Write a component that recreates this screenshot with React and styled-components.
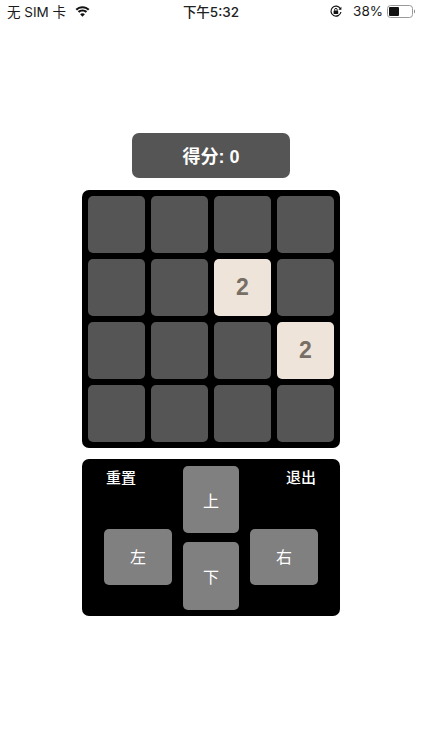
import React from "react";
import styled, { createGlobalStyle } from "styled-components";

const Global = createGlobalStyle`
  html, body { margin: 0; padding: 0; background: #fff; }
  body { font-family: "Liberation Sans", "Noto Sans CJK SC", sans-serif; }
`;

const Page = styled.div`
  width: 422px;
  height: 750px;
  overflow: hidden;
  display: flex;
  flex-direction: column;
  align-items: center;
  background: #fff;
`;

const StatusBar = styled.div`
  width: 100%;
  height: 21px;
  box-sizing: border-box;
  padding: 1px 7px 0 7px;
  display: grid;
  grid-template-columns: 1fr auto 1fr;
  align-items: center;
  font-family: Inter, "Noto Sans CJK SC", sans-serif;
  font-size: 13.5px;
  color: #1a1a1a;
`;

const StatusLeft = styled.div`
  display: flex;
  align-items: center;
  gap: 9px;
`;

const StatusTime = styled.div`
  font-weight: 500;
  font-size: 13.5px;
  color: #222;
`;

const StatusRight = styled.div`
  display: flex;
  align-items: center;
  justify-content: flex-end;
  gap: 4px;
`;

const Percent = styled.span`
  margin-left: 7px;
  font-size: 13.5px;
`;

const Score = styled.div`
  margin-top: 112px;
  width: 158px;
  height: 45px;
  padding-bottom: 2px;
  box-sizing: border-box;
  border-radius: 7px;
  background: #555;
  color: #fff;
  font-size: 18px;
  font-weight: 700;
  display: flex;
  align-items: center;
  justify-content: center;
`;

const Board = styled.div`
  margin-top: 12px;
  width: 258px;
  height: 258px;
  box-sizing: border-box;
  padding: 6px;
  border-radius: 7px;
  background: #000;
  display: grid;
  grid-template-columns: repeat(4, 57px);
  grid-template-rows: repeat(4, 56.7px);
  column-gap: 6px;
  row-gap: 6.3px;
`;

const Cell = styled.div`
  border-radius: 5px;
  background: ${(p) => (p.$value ? "#eee4da" : "#555")};
  color: #776e65;
  font-size: 23px;
  font-weight: 700;
  display: flex;
  align-items: center;
  justify-content: center;
`;

const Controls = styled.div`
  margin-top: 11px;
  width: 258px;
  height: 157px;
  box-sizing: border-box;
  padding: 7px 22px 0;
  border-radius: 7px;
  background: #000;
  display: flex;
  justify-content: space-between;
`;

const SideColumn = styled.div`
  width: 68px;
  display: flex;
  flex-direction: column;
`;

const MiddleColumn = styled.div`
  width: 56px;
  display: flex;
  flex-direction: column;
  gap: 9px;
`;

const TextAction = styled.button`
  height: 63px;
  padding: 0 2px 42px;
  border: 0;
  background: none;
  color: #fff;
  font: 500 15px "Liberation Sans", "Noto Sans CJK SC", sans-serif;
  text-align: ${(p) => p.$align};
`;

const Pad = styled.button`
  width: 100%;
  height: ${(p) => p.$h}px;
  border: 0;
  padding: 0 0 ${(p) => p.$lift || 0}px;
  border-radius: 5px;
  background: #808080;
  color: #fff;
  font: 400 16px "Liberation Sans", "Noto Sans CJK SC", sans-serif;
  display: flex;
  align-items: center;
  justify-content: center;
`;

const Wifi = () => (
  <svg width="15" height="11" viewBox="0 0 17 12" fill="#111">
    <path d="M8.5 2.4c2.4 0 4.6.9 6.2 2.5L16.4 3.2C14.3 1.2 11.5 0 8.5 0S2.7 1.2.6 3.2l1.7 1.7C3.9 3.3 6.1 2.4 8.5 2.4z" />
    <path d="M8.5 6c1.4 0 2.7.5 3.6 1.4l1.7-1.7C12.4 4.4 10.5 3.6 8.5 3.6s-3.9.8-5.3 2.1l1.7 1.7C5.8 6.5 7.1 6 8.5 6z" />
    <path d="M8.5 12l2.7-2.9c-.7-.6-1.7-1-2.7-1s-2 .4-2.7 1z" />
  </svg>
);

const RotationLock = () => (
  <svg width="12" height="13" viewBox="0 0 12 13" fill="none" stroke="#111">
    <path d="M10.4 3.8A5 5 0 1 0 10.9 7" strokeWidth="1.2" />
    <path d="M11.4 1.8v3h-3z" fill="#111" stroke="none" />
    <rect x="3.6" y="5.6" width="4.6" height="3.4" fill="#111" stroke="none" rx=".5" />
    <path d="M4.6 5.6V4.7a1.3 1.3 0 0 1 2.6 0v.9" strokeWidth="1" />
  </svg>
);

const Battery = () => (
  <svg width="28" height="13" viewBox="0 0 28 13">
    <rect x=".5" y=".5" width="25" height="12" rx="3" fill="none" stroke="#999" />
    <rect x="2" y="2" width="10" height="9" rx="1" fill="#111" />
    <path d="M27 4.6v3.8c.6-.3 1-1 1-1.9s-.4-1.6-1-1.9z" fill="#888" />
  </svg>
);

const board = [
  [0, 0, 0, 0],
  [0, 0, 2, 0],
  [0, 0, 0, 2],
  [0, 0, 0, 0],
];

export default function App() {
  return (
    <Page>
      <Global />
      <StatusBar>
        <StatusLeft>
          <span>无 SIM 卡</span>
          <Wifi />
        </StatusLeft>
        <StatusTime>下午5:32</StatusTime>
        <StatusRight>
          <RotationLock />
          <Percent>38%</Percent>
          <Battery />
        </StatusRight>
      </StatusBar>
      <Score>得分: 0</Score>
      <Board>
        {board.flat().map((v, i) => (
          <Cell key={i} $value={v}>
            {v || ""}
          </Cell>
        ))}
      </Board>
      <Controls>
        <SideColumn>
          <TextAction $align="left">重置</TextAction>
          <Pad $h={56} $lift={2}>左</Pad>
        </SideColumn>
        <MiddleColumn>
          <Pad $h={67}>上</Pad>
          <Pad $h={68}>下</Pad>
        </MiddleColumn>
        <SideColumn>
          <TextAction $align="right">退出</TextAction>
          <Pad $h={56} $lift={2}>右</Pad>
        </SideColumn>
      </Controls>
    </Page>
  );
}
